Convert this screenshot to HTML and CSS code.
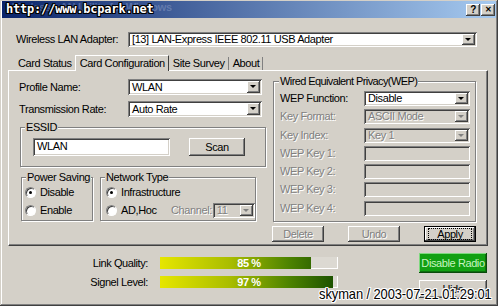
FILE: index.html
```html
<!DOCTYPE html>
<html lang="en">
<head>
    <meta charset="UTF-8">
    <meta name="viewport" content="width=device-width, initial-scale=1.0">
    <title>Wireless LAN Utility</title>
    <link rel="stylesheet" href="styles.css">
</head>
<body>
    <div class="window">
        <div class="titlebar">
            <span class="title-text">Wireless LAN Utility for Windows</span>
            <span class="stamp-url">http://www.bcpark.net</span>
            <span class="cap-btn">?</span>
            <span class="cap-btn close">&#x2715;</span>
        </div>

        <div class="adapter-row">
            <span class="adapter-label">Wireless LAN Adapter:</span>
            <div class="combo adapter-combo"><span class="combo-value">[13] LAN-Express IEEE 802.11 USB Adapter</span><span class="combo-arrow"></span></div>
        </div>

        <div class="tabs">
            <span class="tab">Card Status</span>
            <span class="tab active">Card Configuration</span>
            <span class="tab">Site Survey</span>
            <span class="tab">About</span>
        </div>

        <div class="panel">
            <div class="left-col">
                <div class="field-row">
                    <span class="field-label">Profile Name:</span>
                    <div class="combo short-combo"><span class="combo-value">WLAN</span><span class="combo-arrow"></span></div>
                </div>
                <div class="field-row second">
                    <span class="field-label">Transmission Rate:</span>
                    <div class="combo short-combo"><span class="combo-value">Auto Rate</span><span class="combo-arrow"></span></div>
                </div>

                <div class="group essid">
                    <span class="group-title">ESSID</span>
                    <div class="essid-row">
                        <div class="textbox essid-box">WLAN</div>
                        <span class="btn scan-btn">Scan</span>
                    </div>
                </div>

                <div class="group-row">
                    <div class="group power">
                        <span class="group-title">Power Saving</span>
                        <div class="radio-row"><span class="radio checked"></span>Disable</div>
                        <div class="radio-row"><span class="radio"></span>Enable</div>
                    </div>
                    <div class="group network">
                        <span class="group-title">Network Type</span>
                        <div class="radio-row"><span class="radio checked"></span>Infrastructure</div>
                        <div class="radio-row">
                            <span class="radio"></span><span class="adhoc">AD,Hoc</span>
                            <span class="off-text">Channel:</span>
                            <div class="combo channel-combo off"><span class="combo-value">11</span><span class="combo-arrow"></span></div>
                        </div>
                    </div>
                </div>
            </div>

            <div class="right-col">
                <div class="group wep">
                    <span class="group-title wep-title">Wired Equivalent Privacy(WEP)</span>
                    <div class="wep-grid">
                        <span>WEP Function:</span>
                        <div class="combo"><span class="combo-value">Disable</span><span class="combo-arrow"></span></div>
                        <span class="off-text">Key Format:</span>
                        <div class="combo off"><span class="combo-value">ASCII Mode</span><span class="combo-arrow"></span></div>
                        <span class="off-text">Key Index:</span>
                        <div class="combo off"><span class="combo-value">Key 1</span><span class="combo-arrow"></span></div>
                        <span class="off-text">WEP Key 1:</span>
                        <div class="textbox off"></div>
                        <span class="off-text">WEP Key 2:</span>
                        <div class="textbox off"></div>
                        <span class="off-text">WEP Key 3:</span>
                        <div class="textbox off"></div>
                        <span class="off-text">WEP Key 4:</span>
                        <div class="textbox off"></div>
                    </div>
                </div>
                <div class="wep-buttons">
                    <span class="btn off-btn">Delete</span>
                    <span class="btn off-btn">Undo</span>
                    <span class="btn default-btn"><span class="focus">Apply</span></span>
                </div>
            </div>
        </div>

        <div class="status">
            <div class="meters">
                <span class="meter-label">Link Quality:</span>
                <div class="trough"><div class="fill" style="width: 85%"></div><span class="meter-text">85 %</span></div>
                <span class="meter-label">Signel Level:</span>
                <div class="trough"><div class="fill" style="width: 97%"></div><span class="meter-text">97 %</span></div>
            </div>
            <div class="side-buttons">
                <span class="btn radio-btn">Disable Radio</span>
                <span class="btn hide-btn">Hide</span>
            </div>
        </div>

        <span class="stamp-user">skyman / 2003-07-21 01:29:01</span>
    </div>
</body>
</html>
```

FILE: styles.css
```css
*{
    margin: 0px;
    padding: 0px;
    box-sizing: border-box;
}
body{
    background: #fff;
}
.window{
    position: relative;
    width: 498px;
    height: 306px;
    background: #d4d0c8;
    box-shadow: inset -1px -1px #404040, inset 1px 1px #d4d0c8, inset -2px -2px #808080, inset 2px 2px #fff;
    font: 11px "Liberation Sans", Arial, sans-serif;
    letter-spacing: -0.4px;
    color: #000;
    white-space: nowrap;
    overflow: hidden;
}

/* title bar */
.titlebar{
    position: relative;
    display: flex;
    justify-content: flex-end;
    align-items: center;
    gap: 1px;
    height: 17px;
    margin: 1px 2px 0px 2px;
    padding-right: 1px;
    background: linear-gradient(90deg, #0a246a, #a6caf0);
}
.title-text{
    position: absolute;
    left: 6px;
    top: 0px;
    font: bold 11px "Liberation Sans", sans-serif;
    letter-spacing: -0.3px;
    color: rgba(190, 200, 230, 0.3);
}
.stamp-url{
    position: absolute;
    left: 4px;
    top: 1px;
    font: bold 12px "DejaVu Sans Mono", monospace;
    letter-spacing: -0.2px;
    color: #fff;
    text-shadow: 1px 0 #000, -1px 0 #000, 0 1px #000, 0 -1px #000, 1px 1px #000, -1px -1px #000, 1px -1px #000, -1px 1px #000;
}
.cap-btn{
    width: 14px;
    height: 12px;
    background: #d4d0c8;
    box-shadow: inset -1px -1px #404040, inset 1px 1px #fff, inset -2px -2px #808080;
    font: bold 10px "Liberation Sans", sans-serif;
    line-height: 12px;
    text-align: center;
}
.cap-btn.close{
    font-size: 8px;
}

/* adapter */
.adapter-row{
    display: flex;
    align-items: center;
    height: 16px;
    margin: 13px 0px 0px 16px;
}
.adapter-label{
    width: 112px;
}
.adapter-combo{
    width: 349px;
}

/* shared controls */
.combo, .textbox{
    display: flex;
    align-items: center;
    height: 15px;
    padding: 2px;
    background: #fff;
    box-shadow: inset 1px 1px #808080, inset -1px -1px #fff, inset 2px 2px #404040, inset -2px -2px #d4d0c8;
}
.combo-value{
    flex: 1;
    padding-left: 2px;
    overflow: hidden;
    line-height: 11px;
}
.combo-arrow{
    position: relative;
    width: 13px;
    height: 100%;
    background: #d4d0c8;
    box-shadow: inset -1px -1px #404040, inset 1px 1px #fff, inset -2px -2px #808080;
}
.combo-arrow::after{
    content: "";
    position: absolute;
    left: 3px;
    top: 4px;
    border-left: 3px solid transparent;
    border-right: 3px solid transparent;
    border-top: 3px solid #000;
}
.combo.off, .textbox.off{
    background: #d4d0c8;
}
.combo.off .combo-value, .off-text, .off-btn{
    color: #808080;
    text-shadow: 1px 1px 0 #fff;
}
.combo.off .combo-arrow::after{
    border-top-color: #808080;
}
.btn{
    display: flex;
    align-items: center;
    justify-content: center;
    background: #d4d0c8;
    box-shadow: inset -1px -1px #404040, inset 1px 1px #fff, inset -2px -2px #808080;
}

/* tabs */
.tabs{
    display: flex;
    align-items: flex-end;
    height: 15px;
    margin: 8px 0px 0px 13px;
}
.tab{
    height: 13px;
    line-height: 12px;
    padding: 0px 3px 0px 4px;
    border-right: 1px solid #808080;
}
.tab:first-child{
    padding-left: 5px;
    border-right: none;
}
.tab.active{
    position: relative;
    height: 16px;
    line-height: 14px;
    margin-bottom: -1px;
    padding: 0px 3px 0px 4px;
    background: #d4d0c8;
    border-top: 1px solid #fff;
    border-left: 1px solid #fff;
    border-right: 1px solid #404040;
    z-index: 1;
}

/* panel */
.panel{
    display: flex;
    width: 480px;
    height: 176px;
    margin-left: 8px;
    border-top: 1px solid #fff;
    border-left: 1px solid #fff;
    border-right: 1px solid #404040;
    border-bottom: 1px solid #404040;
    box-shadow: inset -1px -1px #808080;
}
.left-col{
    width: 259px;
    padding: 8px 0px 0px 10px;
}
.field-row{
    display: flex;
    align-items: center;
    height: 16px;
}
.field-row .combo{
    height: 16px;
}
.field-row.second{
    margin-top: 6px;
}
.field-label{
    width: 109px;
}
.short-combo{
    width: 134px;
}

.group{
    position: relative;
    border: 1px solid #808080;
    box-shadow: 1px 1px 0 #fff, inset 1px 1px 0 #fff;
}
.group-title{
    position: absolute;
    left: 4px;
    top: -8px;
    padding: 0px 1px;
    background: #d4d0c8;
    line-height: 14px;
}
.essid{
    width: 246px;
    height: 40px;
    margin: 10px 0px 0px 1px;
    padding: 10px 0px 0px 12px;
}
.essid-row{
    display: flex;
    gap: 19px;
}
.essid-box{
    width: 137px;
    height: 18px;
    padding-left: 4px;
    align-items: flex-start;
    line-height: 12px;
}
.scan-btn{
    width: 56px;
    height: 18px;
}
.group-row{
    display: flex;
    gap: 7px;
    margin: 10px 0px 0px 2px;
}
.power{
    width: 72px;
    height: 44px;
    padding: 5px 0px 0px 3px;
}
.network{
    width: 156px;
    height: 44px;
    padding: 5px 0px 0px 5px;
}
.radio-row{
    display: flex;
    align-items: center;
    height: 18px;
}
.radio{
    position: relative;
    width: 11px;
    height: 11px;
    margin-right: 4px;
    border-radius: 50%;
    background: #fff;
    border: 1px solid;
    border-color: #808080 #fff #fff #808080;
    box-shadow: inset 1px 1px #404040;
}
.radio.checked::after{
    content: "";
    position: absolute;
    left: 3px;
    top: 3px;
    width: 3px;
    height: 3px;
    border-radius: 50%;
    background: #000;
}
.adhoc{
    width: 50px;
}
.channel-combo{
    width: 42px;
    height: 15px;
    margin-left: 1px;
}

/* wep */
.right-col{
    padding: 10px 0px 0px 5px;
}
.wep{
    width: 203px;
    height: 141px;
    padding: 9px 0px 0px 6px;
}
.wep-title{
    left: 5px;
    letter-spacing: -0.6px;
}
.wep-grid{
    display: grid;
    grid-template-columns: 84px 106px;
    grid-auto-rows: 18.3px;
    align-items: start;
}
.wep-grid span{
    line-height: 15px;
}
.wep-buttons{
    display: flex;
    justify-content: space-between;
    width: 204px;
    height: 16px;
    margin: 4px 0px 0px -1px;
}
.wep-buttons .btn{
    width: 52px;
}
.default-btn{
    box-shadow: inset -1px -1px #000, inset 1px 1px #000, inset -2px -2px #404040, inset 2px 2px #fff, inset -3px -3px #808080;
}
.focus{
    padding: 0px 3px;
    border: 1px dotted #000;
    width: 44px;
    text-align: center;
    line-height: 10px;
}

/* status */
.status{
    display: flex;
}
.meters{
    display: grid;
    grid-template-columns: 140px 178px;
    grid-auto-rows: 12px;
    column-gap: 12px;
    row-gap: 7px;
    align-items: center;
    margin: 11px 0px 0px 8px;
}
.meter-label{
    text-align: right;
}
.trough{
    position: relative;
    height: 12px;
    background: #dcd9d2;
    box-shadow: inset -1px -1px #fff;
}
.fill{
    height: 100%;
    background: linear-gradient(90deg, #e6e600 0%, #a8bc00 40%, #4e8400 72%, #174d00 100%);
    background-size: 178px 100%;
}
.meter-text{
    position: absolute;
    left: 0px;
    right: 0px;
    top: 0px;
    text-align: center;
    font-weight: bold;
    line-height: 12px;
    color: #fff;
}
.side-buttons{
    display: flex;
    flex-direction: column;
    gap: 7px;
    margin: 7px 0px 0px 81px;
}
.side-buttons .btn{
    width: 68px;
}
.radio-btn{
    height: 20px;
    background: #12a012;
    color: #c8f4c0;
    box-shadow: inset -1px -1px #0a4a0a, inset 1px 1px #7fd87f, inset -2px -2px #0c700c;
}
.hide-btn{
    height: 18px;
}
.stamp-user{
    position: absolute;
    right: 6px;
    top: 285px;
    font: 15px "Liberation Sans", sans-serif;
    letter-spacing: -0.1px;
    color: #000;
    transform: scaleX(0.86);
    transform-origin: right center;
    text-shadow: 1px 0 #fff, -1px 0 #fff, 0 1px #fff, 0 -1px #fff, 1px 1px #fff, -1px -1px #fff, 1px -1px #fff, -1px 1px #fff;
}
```
